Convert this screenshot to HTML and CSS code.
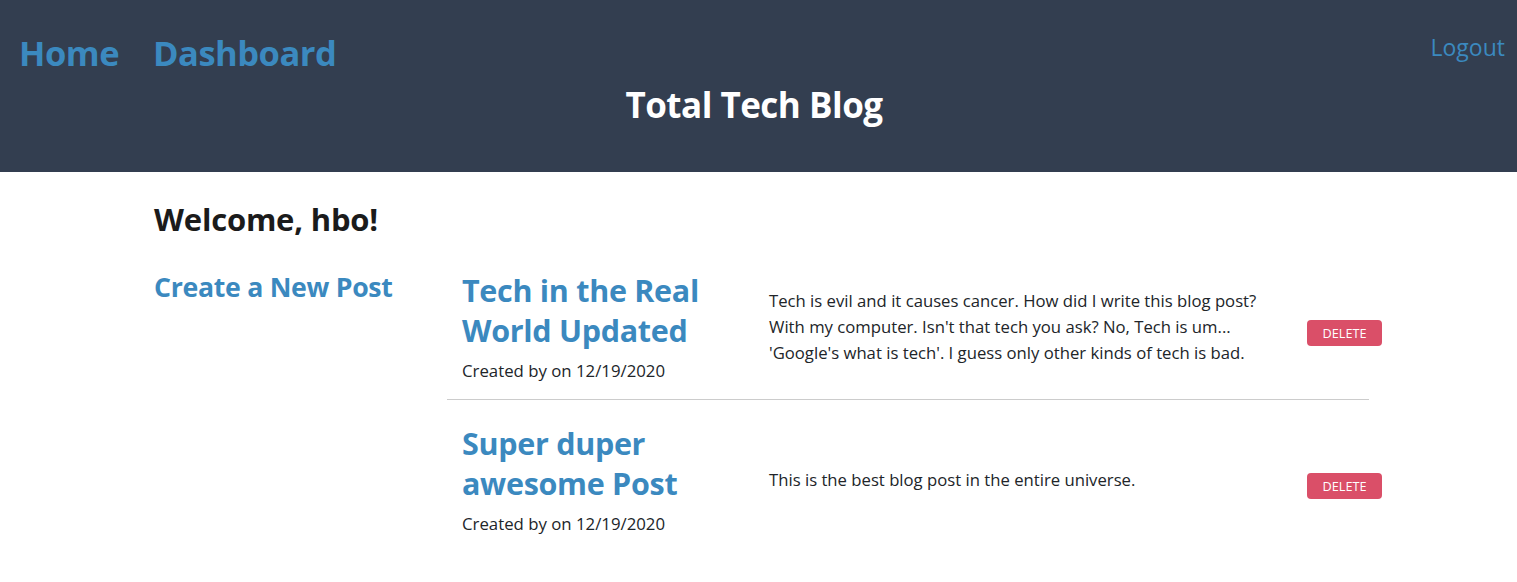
FILE: index.html
```html
<!DOCTYPE html>
<html lang="en">
<head>
<meta charset="utf-8">
<title>Total Tech Blog</title>
<link rel="stylesheet" href="styles.css">
</head>
<body>
<header class="site-header">
  <div class="top-row">
    <nav class="main-nav">
      <a class="nav-link" href="#">Home</a>
      <a class="nav-link" href="#">Dashboard</a>
    </nav>
    <a class="logout" href="#">Logout</a>
  </div>
  <h1 class="site-title">Total Tech Blog</h1>
</header>
<main class="dashboard">
  <h2 class="welcome">Welcome, hbo!</h2>
  <div class="dash-row">
    <aside class="side">
      <a class="create-link" href="#">Create a New Post</a>
    </aside>
    <section class="post-list">
      <article class="post">
        <div class="post-row">
          <div class="post-head">
            <a class="post-title" href="#">Tech in the Real World Updated</a>
            <p class="post-meta">Created by on 12/19/2020</p>
          </div>
          <p class="post-body">Tech is evil and it causes cancer. How did I write this blog post? With my computer. Isn't that tech you ask? No, Tech is um... 'Google's what is tech'. I guess only other kinds of tech is bad.</p>
          <div class="post-action"><button class="btn-delete" type="button">Delete</button></div>
        </div>
      </article>
      <article class="post">
        <div class="post-row">
          <div class="post-head">
            <a class="post-title" href="#">Super duper awesome Post</a>
            <p class="post-meta">Created by on 12/19/2020</p>
          </div>
          <p class="post-body">This is the best blog post in the entire universe.</p>
          <div class="post-action"><button class="btn-delete" type="button">Delete</button></div>
        </div>
      </article>
    </section>
  </div>
</main>
</body>
</html>
```
FILE: styles.css
```css
* { box-sizing: border-box; }
html, body { margin: 0; padding: 0; }
body {
  font-family: "Open Sans", "Noto Sans", "Liberation Sans", sans-serif;
  color: #212529;
  background: #fff;
  font-size: 16px;
  line-height: 1.5;
}
a { text-decoration: none; color: #3b89bf; }

.site-header {
  background: #333e50;
  height: 172px;
  padding: 30px 12px 0 19px;
}
.top-row {
  display: flex;
  justify-content: space-between;
  align-items: flex-start;
}
.main-nav { display: flex; gap: 34px; }
.nav-link {
  font-size: 34.5px;
  font-weight: 700;
  line-height: 46px;
  letter-spacing: -0.5px;
}
.logout {
  font-size: 23px;
  line-height: 34px;
}
.site-title {
  margin: 6px 0 0;
  padding-right: 16px;
  text-align: center;
  color: #fff;
  font-size: 35px;
  font-weight: 700;
  line-height: 46px;
  letter-spacing: -0.5px;
}

.dashboard { padding: 28px 0 0 154px; }
.welcome {
  margin: 0;
  font-size: 31px;
  line-height: 38px;
  font-weight: 700;
  color: #1b1b1b;
  letter-spacing: -0.2px;
}
.dash-row { display: flex; margin-top: 32px; }
.side { width: 293px; flex: none; }
.create-link {
  font-size: 26.7px;
  font-weight: 700;
  line-height: 34px;
  letter-spacing: -0.3px;
}
.post-list { width: 922px; flex: none; }
.post { padding-bottom: 16px; }
.post + .post { border-top: 1px solid #ccc; padding-top: 23px; }
.post-row { display: flex; align-items: center; padding-left: 15px; }
.post-head { width: 307px; flex: none; }
.post-title {
  display: block;
  font-size: 30.5px;
  font-weight: 700;
  line-height: 40px;
  letter-spacing: -0.3px;
  width: 260px;
}
.post-meta { margin: 9px 0 0; font-size: 16.8px; line-height: 24px; }
.post-body {
  width: 538px;
  flex: none;
  margin: 0;
  padding-right: 33px;
  font-size: 16.7px;
  line-height: 26px;
}
.post-action { flex: none; margin-top: 13px; }
.btn-delete {
  font-family: inherit;
  background: #da4f68;
  color: #fff;
  border: 0;
  border-radius: 4px;
  font-size: 12.7px;
  line-height: 18px;
  padding: 4px 10px;
  text-transform: uppercase;
  width: 75px;
  height: 26px;
}
```
